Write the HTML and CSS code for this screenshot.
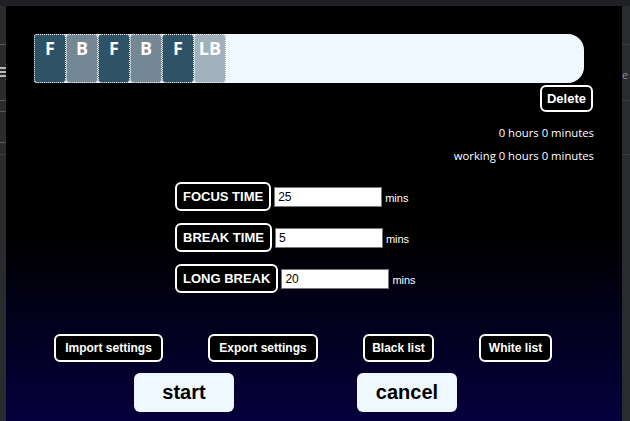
FILE: index.html
```html
<!DOCTYPE html>
<html>
<head>
<meta charset="utf-8">
<link rel="stylesheet" href="styles.css">
</head>
<body>
<div class="frame">
  <div class="side-left">
    <span class="rule r1"></span>
    <span class="menu"><i></i><i></i><i></i></span>
    <span class="rule r2"></span>
    <span class="rule r3"></span>
    <span class="rule r4"></span>
    <span class="rule r5"></span>
  </div>
  <div class="popup">
    <div class="bar">
      <div class="blk focus">F</div>
      <div class="blk brk">B</div>
      <div class="blk focus">F</div>
      <div class="blk brk">B</div>
      <div class="blk focus">F</div>
      <div class="blk long">LB</div>
    </div>
    <div class="delete-row"><button class="outline del">Delete</button></div>
    <div class="stats">
      <div>0 hours 0 minutes</div>
      <div>working 0 hours 0 minutes</div>
    </div>
    <div class="form">
      <div class="row"><span class="outline lbl">FOCUS TIME</span><input class="num" value="25"><span class="unit">mins</span></div>
      <div class="row"><span class="outline lbl">BREAK TIME</span><input class="num" value="5"><span class="unit">mins</span></div>
      <div class="row"><span class="outline lbl">LONG BREAK</span><input class="num" value="20"><span class="unit">mins</span></div>
    </div>
    <div class="tools">
      <button class="outline tool t1">Import settings</button>
      <button class="outline tool t2">Export settings</button>
      <button class="outline tool t3">Black list</button>
      <button class="outline tool t4">White list</button>
    </div>
    <div class="actions">
      <button class="big">start</button>
      <button class="big">cancel</button>
    </div>
  </div>
  <div class="side-right">
    <span class="rule q1"></span>
    <span class="ghost">e</span>
    <span class="rule q2"></span>
    <span class="rule q3"></span>
  </div>
</div>
</body>
</html>
```
FILE: styles.css
```css
html, body {
  margin: 0;
  padding: 0;
  width: 630px;
  height: 421px;
  overflow: hidden;
  background: #2a2b2e;
  font-family: "Liberation Sans", Arial, sans-serif;
}

.frame {
  display: flex;
  padding-top: 6px;
  height: 415px;
  background: linear-gradient(to bottom, #202124 0, #202124 6px, #2a2b2e 6px);
}

.side-left {
  width: 6px;
  position: relative;
  background: #2a2b2e;
}

.side-right {
  width: 8px;
  position: relative;
  background: #2a2b2e;
  overflow: hidden;
}

.rule {
  position: absolute;
  left: 0;
  right: 0;
  height: 1px;
  background: #55575b;
}
.r1 { top: 38px; }
.r2 { top: 94px; }
.r3 { top: 105px; }
.r4 { top: 136px; }
.r5 { top: 148px; background: #3c3d41; }
.q1 { top: 38px; background: #3c3d41; }
.q2 { top: 94px; background: #3c3d41; }
.q3 { top: 148px; background: #3c3d41; }

.menu {
  position: absolute;
  top: 61px;
  left: 0;
  width: 6px;
  display: flex;
  flex-direction: column;
  gap: 2px;
}
.menu i {
  display: block;
  height: 2px;
  background: #b8babd;
}

.ghost {
  position: absolute;
  top: 62px;
  left: 0;
  color: #8a8c90;
  font-family: "Open Sans", sans-serif;
  font-size: 11px;
  line-height: 14px;
}

.popup {
  width: 616px;
  height: 415px;
  display: flex;
  flex-direction: column;
  background: linear-gradient(to bottom, #000 0%, #000 55%, #05003c 100%);
}

.bar {
  margin: 28px 38px 0 28px;
  height: 49px;
  background: #f0f8ff;
  border-radius: 3px 16px 16px 3px;
  display: flex;
}

.blk {
  width: 30px;
  height: 46px;
  border: 1px dotted #ffffff;
  border-radius: 4px;
  color: #ffffff;
  font-family: "Open Sans", sans-serif;
  font-weight: 700;
  font-size: 18px;
  line-height: 24px;
  padding-top: 1px;
  text-align: center;
}
.focus { background: #2e5366; }
.brk { background: #738795; }
.long { background: #a1b1bc; }

.outline {
  border: 2px solid #ffffff;
  border-radius: 6px;
  background: #000;
  color: #ffffff;
  font-family: "Liberation Sans", Arial, sans-serif;
  font-weight: 700;
  box-sizing: border-box;
  white-space: nowrap;
}

button { margin: 0; cursor: pointer; }

.delete-row {
  display: flex;
  justify-content: flex-end;
  padding-right: 29px;
  margin-top: 2px;
}
.del {
  width: 53px;
  height: 27px;
  padding: 0;
  font-size: 13px;
}

.stats {
  margin-top: 9px;
  padding-right: 28px;
  text-align: right;
  color: #ffffff;
  font-family: "Open Sans", sans-serif;
  font-size: 11.3px;
  line-height: 23px;
}

.form {
  margin-top: 15px;
  padding-left: 169px;
  display: flex;
  flex-direction: column;
  gap: 12px;
}

.row {
  display: flex;
  align-items: center;
  height: 29px;
}

.lbl {
  height: 29px;
  padding: 0 6px;
  font-size: 13px;
  line-height: 25px;
  display: inline-block;
}

.num {
  margin-left: 3px;
  width: 108px;
  height: 20px;
  box-sizing: border-box;
  border: 1px solid #767676;
  padding: 0 3px;
  font-family: "Liberation Sans", Arial, sans-serif;
  font-size: 12px;
  color: #000;
  background: #fff;
}

.unit {
  margin-left: 3px;
  margin-top: 2px;
  color: #ffffff;
  font-size: 11px;
}

.tools {
  margin-top: 41px;
  padding-left: 48px;
  display: flex;
  gap: 45px;
}

.tool {
  height: 28px;
  padding: 0;
  font-size: 12px;
}
.t1 { width: 109px; }
.t2 { width: 110px; }
.t3 { width: 71px; }
.t4 { width: 73px; }

.actions {
  margin-top: 11px;
  padding-left: 128px;
  display: flex;
  gap: 123px;
}

.big {
  width: 100px;
  height: 39px;
  border: none;
  border-radius: 6px;
  background: #f0f8ff;
  color: #000;
  font-family: "Liberation Sans", Arial, sans-serif;
  font-weight: 700;
  font-size: 20px;
  padding: 0;
}
```
